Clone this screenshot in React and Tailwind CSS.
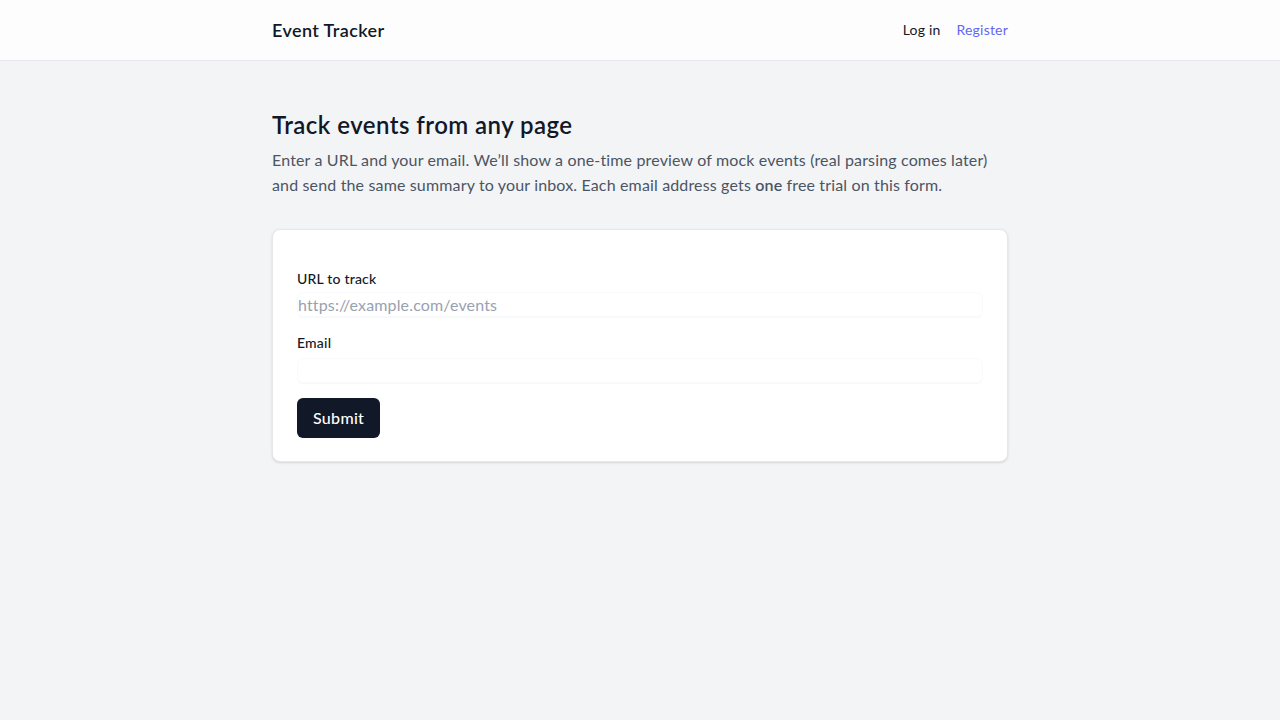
import React, { useState } from 'react';

const App = () => {
  const [url, setUrl] = useState('');
  const [email, setEmail] = useState('');

  return (
    <div className="min-h-screen bg-[#f3f4f6] text-gray-900" style={{ fontFamily: 'Lato, "Noto Sans", sans-serif' }}>
      <header className="bg-[#fdfdfd] border-b border-gray-200">
        <div className="mx-auto w-[736px] h-[60px] flex items-center justify-between">
          <span className="text-lg font-semibold tracking-[0.4px] text-[#111827]">Event Tracker</span>
          <nav className="flex items-center gap-4 text-sm tracking-[0.2px]">
            <a href="#" className="text-[#111827]">Log in</a>
            <a href="#" className="text-[#6366f1]">Register</a>
          </nav>
        </div>
      </header>

      <main className="mx-auto w-[736px] pt-[48px]">
        <h1 className="text-2xl font-semibold tracking-[0.45px] text-[#111827] leading-8">Track events from any page</h1>
        <p className="mt-[6px] text-base leading-[25px] tracking-[0.15px] text-[#4b5563]">
          Enter a URL and your email. We’ll show a one-time preview of mock events (real parsing comes later)
          <br />
          and send the same summary to your inbox. Each email address gets <strong className="font-semibold">one</strong> free
          trial on this form.
        </p>

        <form
          onSubmit={(e) => e.preventDefault()}
          className="mt-[32px] bg-white border border-gray-200 rounded-lg shadow-sm px-6 pt-[39px] pb-[23px]"
        >
          <label className="block text-sm leading-5 font-medium tracking-[0.2px] text-[#111827]">URL to track</label>
          <input
            value={url}
            onChange={(e) => setUrl(e.target.value)}
            placeholder="https://example.com/events"
            className="mt-[3px] block w-full h-[25px] rounded-md border border-gray-50 shadow-[0_1px_1px_rgba(0,0,0,0.03)] text-base tracking-[0.15px] placeholder:text-gray-400 outline-none"
          />
          <label className="mt-4 block text-sm leading-5 font-medium tracking-[0.2px] text-[#111827]">Email</label>
          <input
            value={email}
            onChange={(e) => setEmail(e.target.value)}
            type="email"
            className="mt-[5px] block w-full h-[25px] rounded-md border border-gray-50 shadow-[0_1px_1px_rgba(0,0,0,0.03)] text-base outline-none"
          />
          <button
            type="submit"
            className="mt-[15px] h-10 px-4 rounded-md bg-[#111827] text-white text-base font-medium tracking-[0.3px]"
          >
            Submit
          </button>
        </form>
      </main>
    </div>
  );
};

export default App;
